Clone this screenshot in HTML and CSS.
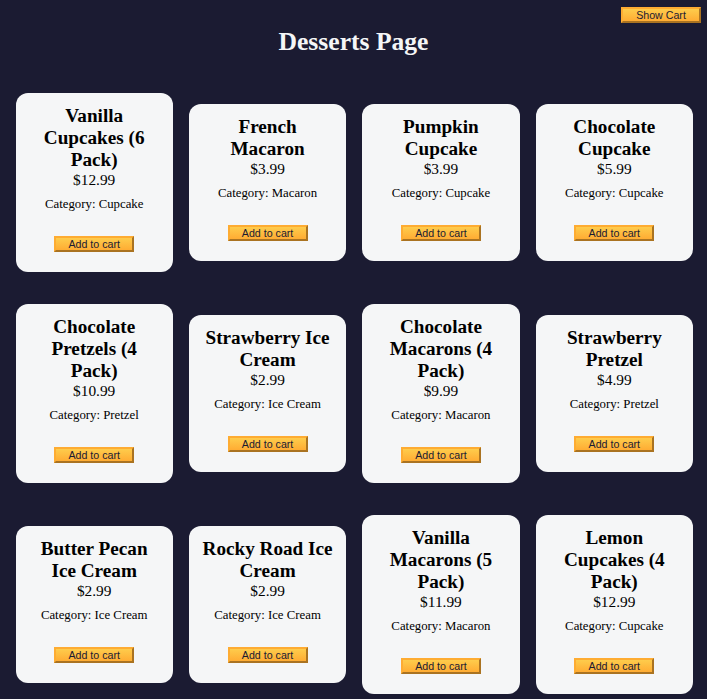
FILE: index.html
```html
<!DOCTYPE html>
<html lang="en">
<head>
<meta charset="utf-8">
<title>Desserts Page</title>
<link rel="stylesheet" href="styles.css">
</head>
<body>
<header class="header">
  <button class="btn cart-btn">Show Cart</button>
  <h1 class="title">Desserts Page</h1>
</header>
<main class="cards">
  <div class="card"><h2>Vanilla Cupcakes (6 Pack)</h2><p class="price">$12.99</p><p class="category">Category: Cupcake</p><button class="btn add-btn">Add to cart</button></div>
  <div class="card"><h2>French Macaron</h2><p class="price">$3.99</p><p class="category">Category: Macaron</p><button class="btn add-btn">Add to cart</button></div>
  <div class="card"><h2>Pumpkin Cupcake</h2><p class="price">$3.99</p><p class="category">Category: Cupcake</p><button class="btn add-btn">Add to cart</button></div>
  <div class="card"><h2>Chocolate Cupcake</h2><p class="price">$5.99</p><p class="category">Category: Cupcake</p><button class="btn add-btn">Add to cart</button></div>
  <div class="card"><h2>Chocolate Pretzels (4 Pack)</h2><p class="price">$10.99</p><p class="category">Category: Pretzel</p><button class="btn add-btn">Add to cart</button></div>
  <div class="card"><h2>Strawberry Ice Cream</h2><p class="price">$2.99</p><p class="category">Category: Ice Cream</p><button class="btn add-btn">Add to cart</button></div>
  <div class="card"><h2>Chocolate Macarons (4 Pack)</h2><p class="price">$9.99</p><p class="category">Category: Macaron</p><button class="btn add-btn">Add to cart</button></div>
  <div class="card"><h2>Strawberry Pretzel</h2><p class="price">$4.99</p><p class="category">Category: Pretzel</p><button class="btn add-btn">Add to cart</button></div>
  <div class="card"><h2>Butter Pecan Ice Cream</h2><p class="price">$2.99</p><p class="category">Category: Ice Cream</p><button class="btn add-btn">Add to cart</button></div>
  <div class="card"><h2>Rocky Road Ice Cream</h2><p class="price">$2.99</p><p class="category">Category: Ice Cream</p><button class="btn add-btn">Add to cart</button></div>
  <div class="card"><h2>Vanilla Macarons (5 Pack)</h2><p class="price">$11.99</p><p class="category">Category: Macaron</p><button class="btn add-btn">Add to cart</button></div>
  <div class="card"><h2>Lemon Cupcakes (4 Pack)</h2><p class="price">$12.99</p><p class="category">Category: Cupcake</p><button class="btn add-btn">Add to cart</button></div>
</main>
</body>
</html>
```
FILE: styles.css
```css
* {
  margin: 0;
  padding: 0;
  box-sizing: border-box;
}

body {
  background-color: #1b1b32;
  font-family: "Liberation Serif", "Times New Roman", serif;
  color: #000;
}

.header {
  position: relative;
  padding-top: 7px;
}

.title {
  color: #f5f6f7;
  text-align: center;
  font-size: 25.6px;
  font-weight: bold;
  margin: 20px 0;
}

.cards {
  display: grid;
  grid-template-columns: repeat(4, 1fr);
  align-items: center;
  column-gap: 16px;
  row-gap: 32px;
  padding: 16px 14px 16px 15.5px;
}

.card {
  background-color: #f5f6f7;
  padding: 12px;
  text-align: center;
  border-radius: 12px;
}

.card h2 {
  font-size: 19.2px;
  font-weight: bold;
}

.price {
  font-size: 15.36px;
}

.category {
  font-size: 12.8px;
  margin: 8px 0;
}

.btn {
  display: block;
  cursor: pointer;
  width: 80px;
  font-family: "Liberation Sans", Arial, sans-serif;
  font-size: 10.67px;
  color: #1b1b32;
  background-color: #feac32;
  background-image: linear-gradient(#fecc4c, #ffac33);
  border: 2px outset #feac32;
}

.cart-btn {
  position: absolute;
  top: 7px;
  right: 6px;
}

.add-btn {
  margin: 24px auto 8px;
}
```
